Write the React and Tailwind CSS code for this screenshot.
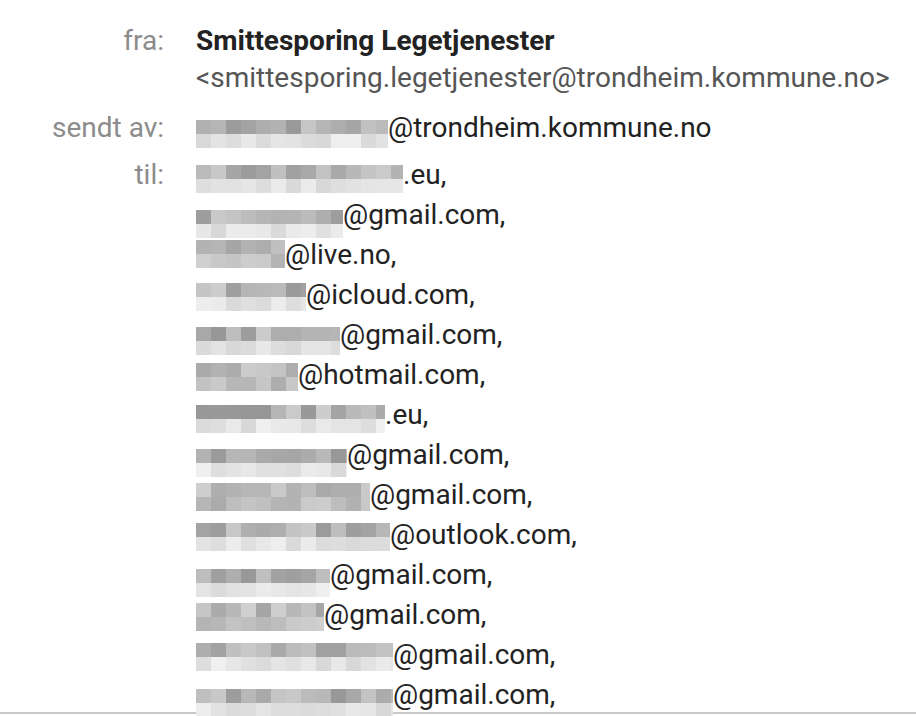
import React from 'react';

// deterministic pseudo random so the mosaic stays the same on each render
function rand(seed) {
  let s = seed;
  return () => {
    s = (s * 9301 + 49297) % 233280;
    return s / 233280;
  };
}

function shade(v) {
  const c = Math.round(v);
  return `rgb(${c},${c},${c})`;
}

// pixelated (redacted) block: two rows of 15px cells
function Mosaic({ width, seed, dark = 'top', top = 10, last = false }) {
  const r = rand(seed);
  const cols = Math.ceil(width / 15);
  const rows = [dark === 'top' ? [150, 205] : [210, 165], dark === 'top' ? [215, 240] : [170, 210]];
  return (
    <span
      className={`relative z-10 inline-flex flex-col align-top overflow-hidden ${last ? 'h-[28px]' : 'h-[28px]'}`}
      style={{ width, marginTop: top }}
    >
      {rows.map(([lo, hi], ri) => (
        <span key={ri} className="flex h-[14px]">
          {Array.from({ length: cols }).map((_, i) => (
            <span
              key={i}
              className="h-full w-[15px] shrink-0"
              style={{ backgroundColor: shade(lo + r() * (hi - lo)) }}
            />
          ))}
        </span>
      ))}
    </span>
  );
}

const recipients = [
  { w: 207, rest: '.eu,', seed: 11, dark: 'top', top: 10 },
  { w: 147, rest: '@gmail.com,', seed: 23, dark: 'top', top: 15 },
  { w: 89, rest: '@live.no,', seed: 37, dark: 'bottom', top: 5 },
  { w: 110, rest: '@icloud.com,', seed: 41, dark: 'top', top: 8 },
  { w: 144, rest: '@gmail.com,', seed: 53, dark: 'top', top: 12 },
  { w: 102, rest: '@hotmail.com,', seed: 67, dark: 'bottom', top: 8 },
  { w: 189, rest: '.eu,', seed: 71, dark: 'top', top: 10 },
  { w: 151, rest: '@gmail.com,', seed: 83, dark: 'top', top: 14 },
  { w: 174, rest: '@gmail.com,', seed: 97, dark: 'bottom', top: 8 },
  { w: 194, rest: '@outlook.com,', seed: 101, dark: 'top', top: 8 },
  { w: 134, rest: '@gmail.com,', seed: 113, dark: 'top', top: 14 },
  { w: 128, rest: '@gmail.com,', seed: 127, dark: 'bottom', top: 8 },
  { w: 197, rest: '@gmail.com,', seed: 131, dark: 'top', top: 8 },
  { w: 197, rest: '@gmail.com,', seed: 139, dark: 'top', top: 14 },
];

function Label({ children }) {
  return <div className="w-[164px] shrink-0 text-right text-[#8c8c8c]">{children}</div>;
}

export default function App() {
  return (
    <div
      className="h-[716px] overflow-hidden bg-white text-[28px] text-[#222]"
      style={{ fontFamily: 'Roboto, "Liberation Sans", sans-serif' }}
    >
      <div className="h-[712px] pt-[22px]">
        <div className="flex gap-[32px] leading-[37px]">
          <Label>fra:</Label>
          <div>
            <div className="font-bold">Smittesporing Legetjenester</div>
            <div className="text-[#555]">&lt;smittesporing.legetjenester@trondheim.kommune.no&gt;</div>
          </div>
        </div>

        <div className="mt-[12px] flex gap-[32px] leading-[40px]">
          <Label>sendt av:</Label>
          <div className="flex whitespace-nowrap">
            <Mosaic width={192} seed={7} dark="top" top={12} />
            <span>@trondheim.kommune.no</span>
          </div>
        </div>

        <div className="mt-[7px] flex gap-[32px] leading-[40px]">
          <Label>til:</Label>
          <div>
            {recipients.map((p, i) => (
              <div key={i} className="flex h-[40px] whitespace-nowrap">
                <Mosaic width={p.w} seed={p.seed} dark={p.dark} top={p.top} />
                <span>{p.rest}</span>
              </div>
            ))}
          </div>
        </div>
      </div>
      <div className="h-[2px] bg-[#c8c8c8]" />
    </div>
  );
}
